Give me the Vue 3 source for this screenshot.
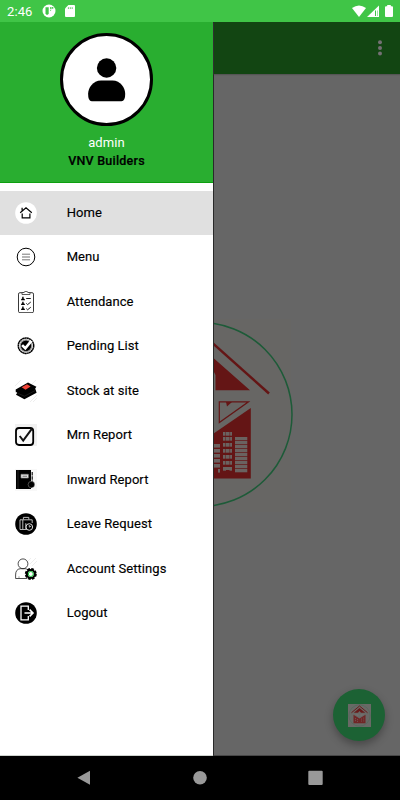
<script setup>
const items = [
  { id: 'home', label: 'Home' },
  { id: 'menu', label: 'Menu' },
  { id: 'attendance', label: 'Attendance' },
  { id: 'pending', label: 'Pending List' },
  { id: 'stock', label: 'Stock at site' },
  { id: 'mrn', label: 'Mrn Report' },
  { id: 'inward', label: 'Inward Report' },
  { id: 'leave', label: 'Leave Request' },
  { id: 'account', label: 'Account Settings' },
  { id: 'logout', label: 'Logout' },
]
const strips = [444, 449, 454, 459, 464, 469]
const towers = [432, 437, 443, 449, 455, 461, 467]
const slats = [437, 441, 445, 449, 453, 457, 461, 465, 469]
</script>

<template>
  <div class="phone">
    <header class="status">
      <span class="time">2:46</span>
      <svg class="notif" width="14" height="14" viewBox="0 0 14 14">
        <circle cx="7" cy="7" r="6.5" fill="#fff" />
        <path d="M3.5 3.3H6.7V9.4L5.9 10.8H4.4L3.5 9.4Z" fill="#40c547" />
        <path d="M8.2 3.1H9.5V5.3H8.2ZM10.1 3.1H11.3V4.8H10.1ZM8.2 6H9.4L8.2 7.2Z" fill="#40c547" />
      </svg>
      <svg class="sd" width="10" height="12" viewBox="0 0 10 12">
        <path d="M3.4 0H9Q10 0 10 1V11Q10 12 9 12H1Q0 12 0 11V3.4Z" fill="#fff" />
        <path d="M3.4 2.2V4M5.3 2.2V4M7.2 2.2V4" stroke="#40c547" stroke-width=".8" />
      </svg>
      <svg class="signals" width="42" height="13" viewBox="0 0 42 13">
        <path d="M0 3Q7 -2.2 14 3L7 12Z" fill="#fff" />
        <path d="M27 .5V12H15Z" fill="#fff" />
        <path d="M23 5.5H25.5V11H23Z" fill="#40c547" />
        <path d="M24 4.5H25V11H24Z" fill="#fff" />
        <path d="M35.2 0H38.8V1.2H40Q41 1.2 41 2.2V11Q41 12 40 12H34Q33 12 33 11V2.2Q33 1.2 34 1.2H35.2Z" fill="#fff" />
      </svg>
    </header>

    <div class="body">
      <aside class="drawer">
        <div class="profile">
          <div class="avatar">
            <svg width="92" height="92" viewBox="0 0 92 92">
              <circle cx="45.6" cy="34" r="9.7" />
              <path d="M40 46.5H51.5C59.5 46.5 64.2 54 64.2 60Q64.2 67.3 60.5 67.3H30.7Q27.1 67.3 27.1 60C27.1 54 32 46.5 40 46.5Z" />
            </svg>
          </div>
          <div class="user">admin</div>
          <div class="company">VNV Builders</div>
        </div>
        <nav class="menu">
          <a v-for="(item, i) in items" :key="item.id" class="row" :class="{ active: i === 0 }">
            <svg class="icon" viewBox="0 0 22 22" width="22" height="22" fill="none" stroke="#000">
              <g v-if="item.id === 'home'">
                <circle cx="11" cy="11" r="10.8" fill="#fff" stroke="none" />
                <path d="M5.2 10.8L11 5.9L16.8 10.8M7.1 8.5V5.8M7.2 11.5V15.9H14.9V11.5" stroke-width="1.2" />
              </g>
              <g v-else-if="item.id === 'menu'">
                <circle cx="11" cy="11" r="8.8" stroke-width="1" />
                <path d="M7 8.2H15M7 13.8H15" stroke="#555" stroke-width=".8" />
                <path d="M7 11H15" stroke="#999" stroke-width="1.4" />
              </g>
              <g v-else-if="item.id === 'attendance'">
                <rect x="3.5" y="1.7" width="15" height="20" rx="1.4" stroke="#222" stroke-width=".9" />
                <path d="M7 3.5V1.5H9.2L9.8 .4H12.2L12.8 1.5H15V3.5Z" fill="#fff" stroke="#333" stroke-width=".8" />
                <path d="M6 9.2Q6 7.4 7.2 7.4V5.8H8.6V7.4Q10 7.4 10 9.2ZM6 14Q6 12.2 7.2 12.2V10.7H8.6V12.2Q10 12.2 10 14ZM6 19Q6 17.2 7.2 17.2V15.6H8.6V17.2Q10 17.2 10 19Z" fill="#000" stroke="none" />
                <path d="M11.2 7.5H15.8M11.3 12.4L12.6 13.6L15.8 11M11.3 17.6L12.6 18.8L15.8 16.2" stroke-width=".9" />
              </g>
              <g v-else-if="item.id === 'pending'">
                <circle cx="11" cy="10.7" r="7.7" stroke="#000" stroke-width="1.5" stroke-dasharray="2.1 .2" />
                <circle cx="11" cy="10.7" r="5.8" fill="#000" stroke="#999" stroke-width="1.2" />
                <path d="M7.1 10.1L10.3 13.3L16.4 5.9" stroke="#fff" stroke-width="2.7" />
              </g>
              <g v-else-if="item.id === 'stock'">
                <path d="M0 6L6 0M0 13L3 10M15 22L22 15M18 22L22 18M17 4L21 0" stroke="#ddd" stroke-width=".5" />
                <path d="M.7 9.5L13 2.5L21.4 6.7L20.2 8.5L21.6 12.8L9.4 19.3L1 14.7L2.2 12.8L.7 11.7Z" fill="#000" stroke="none" />
                <path d="M6.7 7.2L12 4.2L15.6 6.6L10.5 9.7Z" fill="#f04438" stroke="none" />
                <path d="M2 13L9.5 16.2L20 10.6" stroke="#333" stroke-width=".5" />
              </g>
              <g v-else-if="item.id === 'mrn'">
                <path d="M0 0H22V22H0Z" fill="#f1f1f1" stroke="none" />
                <rect x="1" y="4" width="17.2" height="17" rx="3" fill="#fafafa" stroke-width="1.8" />
                <path d="M4.7 12L8.2 16.5L17 4.7" stroke="#111" stroke-width="2" />
              </g>
              <g v-else-if="item.id === 'inward'">
                <path d="M0 0H22V22H0Z" fill="#f8f8f8" stroke="none" />
                <path d="M1 1H16V20H1Z" fill="#000" stroke="none" />
                <path d="M3 1V20" stroke="#444" stroke-width=".5" />
                <path d="M6 5.3H13.3V9H6Z" fill="#eee" stroke="#888" stroke-width=".7" />
                <path d="M7.5 7.2H12" stroke="#444" stroke-width=".8" />
                <path d="M17.2 3V13" stroke-width="1.1" stroke-dasharray="3.5 .8" />
                <circle cx="16.4" cy="15.6" r="3.3" fill="#000" stroke="#f8f8f8" stroke-width=".3" />
              </g>
              <g v-else-if="item.id === 'leave'">
                <circle cx="11" cy="11" r="10.8" fill="#000" stroke="none" />
                <path d="M12 16.5H5V6.8H17.2V10M8.4 6.5V4.4H13.8V6.5M7.8 7V16M10.8 16V10.2" stroke="#ccc" stroke-width=".9" />
                <circle cx="14.3" cy="14" r="3.3" fill="#000" stroke="#ddd" stroke-width="1" />
                <path d="M14.3 12V14.2L16.2 13" stroke="#ddd" stroke-width=".8" />
              </g>
              <g v-else-if="item.id === 'account'">
                <path d="M12 4L16 0M15 6L21 0M17 8L22 3" stroke="#ddd" stroke-width=".5" />
                <circle cx="8" cy="5.8" r="4.9" stroke="#222" stroke-width=".8" />
                <path d="M12.3 20.5H.6V17Q.6 11.2 5.2 10.7H10.3Q12 11 13 12" stroke="#222" stroke-width=".8" />
                <path d="M4 20V18.3" stroke="#777" stroke-width=".7" />
                <circle cx="15.8" cy="16" r="5" stroke-width="2" stroke-dasharray="2.6 1.3" />
                <circle cx="15.8" cy="16" r="4" fill="#fff" stroke="#000" stroke-width="2.2" />
                <circle cx="15.8" cy="16" r="2.5" fill="#fff" stroke="#14c737" stroke-width="1" />
              </g>
              <g v-else>
                <circle cx="11" cy="11" r="10.8" fill="#000" stroke="none" />
                <path d="M13.3 8V4.2H6V17.8H13.3V14" stroke="#fff" stroke-width="1.3" />
                <path d="M9.5 11H17.7M14.6 7.6L18 11L14.6 14.4" stroke="#fff" stroke-width="1.6" />
              </g>
            </svg>
            <span class="label">{{ item.label }}</span>
          </a>
        </nav>
      </aside>

      <main class="page">
        <div class="appbar">
          <svg width="4" height="16" viewBox="0 0 4 16" fill="#747074">
            <circle cx="2" cy="2.3" r="2" /><circle cx="2" cy="8" r="2" /><circle cx="2" cy="13.6" r="2" />
          </svg>
        </div>
        <div class="content">
          <svg class="logo" width="89" height="200" viewBox="214 315 89 200">
            <path d="M213 319H291V512H213Z" fill="#676664" />
            <circle cx="200" cy="414.5" r="92" fill="none" stroke="#1d5b38" stroke-width="1.5" />
            <path d="M200 332L269 393.5" stroke="#641515" stroke-width="2.4" />
            <path d="M213 357.5L250 390.3H215.5V375L213 370Z" fill="#641515" />
            <path d="M219.3 401.8H248.5L219.3 422.5Z" fill="none" stroke="#641515" stroke-width="1.2" />
            <path d="M226 402H232L227 406.5Z" fill="#641515" />
            <path d="M213 434L250.8 408V478.5H213Z" fill="#641515" />
            <g fill="#6a6260">
              <rect v-for="y in strips" :key="y" x="213" :y="y" width="7" height="3.6" />
              <rect v-for="y in towers" :key="y" x="223" :y="y" width="9" height="3.7" />
              <rect v-for="y in slats" :key="y" x="235" :y="y" width="12.3" height="3.3" />
            </g>
            <path d="M226 470H229.5V475H226ZM213 468H218V473H213Z" fill="#641515" />
            <path d="M225.5 432V465M229.7 432V465" stroke="#641515" stroke-width=".5" />
          </svg>
          <button class="fab">
            <svg width="23" height="23" viewBox="0 0 23 23">
              <path d="M0 0H23V23H0Z" fill="#696966" />
              <circle cx="11.5" cy="11.5" r="10.7" fill="none" stroke="#52695b" stroke-width=".7" />
              <path d="M3.5 8.7L11.5 2L19.5 8.7" fill="none" stroke="#681b1b" stroke-width="1" />
              <path d="M5.8 8.7L11.5 4L17.2 8.7H13L11.5 7L10 8.7Z" fill="#681b1b" />
              <path d="M5.5 10.7L11.5 14.5L17.5 10.7V19.3H5.5Z" fill="#702626" />
              <path d="M6.7 10.3H10.5V12.4ZM16.4 10.3H12.5V12.4Z" fill="#747070" />
              <path d="M7.5 14V18M9.5 15V18M13.5 14.5V18M15.7 13.5V18" stroke="#777" stroke-width=".5" stroke-dasharray="1.2 .8" />
            </svg>
          </button>
        </div>
      </main>
    </div>

    <footer class="navbar">
      <svg width="14" height="16" viewBox="0 0 14 16"><path d="M13 .8V14.8L.4 7.8Z" /></svg>
      <svg width="14" height="16" viewBox="0 0 14 16"><circle cx="7" cy="7.8" r="6.8" /></svg>
      <svg width="15" height="16" viewBox="0 0 15 16"><rect x=".3" y=".8" width="14.4" height="14.2" rx="1" /></svg>
    </footer>
  </div>
</template>

<style>
body { margin: 0; overflow: hidden; }
</style>

<style scoped>
.phone { width: 400px; height: 800px; display: flex; flex-direction: column; font-family: Roboto, sans-serif; overflow: hidden; background: #666; }
.phone svg { display: block; flex: none; }
.status { height: 22px; flex: none; box-sizing: border-box; display: flex; align-items: center; padding: 0 7px; background: #40c547; color: #fff; }
.time { width: 35px; font-size: 13px; line-height: 22px; letter-spacing: .1px; padding-top: 1px; }
.sd { margin-left: 9px; }
.signals { margin-left: auto; margin-right: -1px; }
.body { display: flex; height: 734px; flex: none; }
.drawer { width: 213px; flex: none; background: #fff; box-sizing: border-box; border-bottom: 1px solid #ced3ce; }
.profile { height: 161px; box-sizing: border-box; background: #29ae30; border-bottom: 1px solid #0ca00f; display: flex; flex-direction: column; align-items: center; padding-top: 11px; }
.avatar { width: 93px; height: 93px; box-sizing: border-box; border: 3px solid #000; border-radius: 50%; background: #fff; display: flex; align-items: center; justify-content: center; flex: none; }
.user { margin-top: 8px; color: #fff; font-size: 13px; line-height: 17px; letter-spacing: .1px; }
.company { color: #000; font-size: 12.5px; font-weight: 500; -webkit-text-stroke: .2px #000; line-height: 19px; letter-spacing: .23px; }
.menu { padding-top: 7.8px; }
.row { height: 44.45px; display: flex; align-items: center; padding-left: 15px; }
.row.active { background: #e0e0e0; }
.label { margin-left: 29.7px; font-size: 13px; font-weight: 400; -webkit-text-stroke: .15px #000; line-height: 18px; color: #000; letter-spacing: .06px; white-space: nowrap; }
.page { flex: 1; display: flex; flex-direction: column; box-sizing: border-box; border-left: 1px solid #292929; border-bottom: 1px solid #474747; background: #666; }
.appbar { height: 52px; flex: none; background: #124512; display: flex; align-items: center; justify-content: flex-end; padding-right: 18px; box-shadow: 0 1px 1px #555; }
.content { flex: 1; position: relative; padding-top: 241px; }
.fab { position: absolute; right: 15px; bottom: 14px; width: 52px; height: 52px; padding: 0; border: 0; border-radius: 50%; background: #1c6234; display: flex; align-items: center; justify-content: center; box-shadow: 0 4px 8px rgba(0, 0, 0, .3); }
.navbar { height: 44px; flex: none; box-sizing: border-box; background: #000; display: flex; align-items: center; justify-content: space-between; padding: 0 77px 0 77px; }
.navbar svg { fill: #999; }
</style>
